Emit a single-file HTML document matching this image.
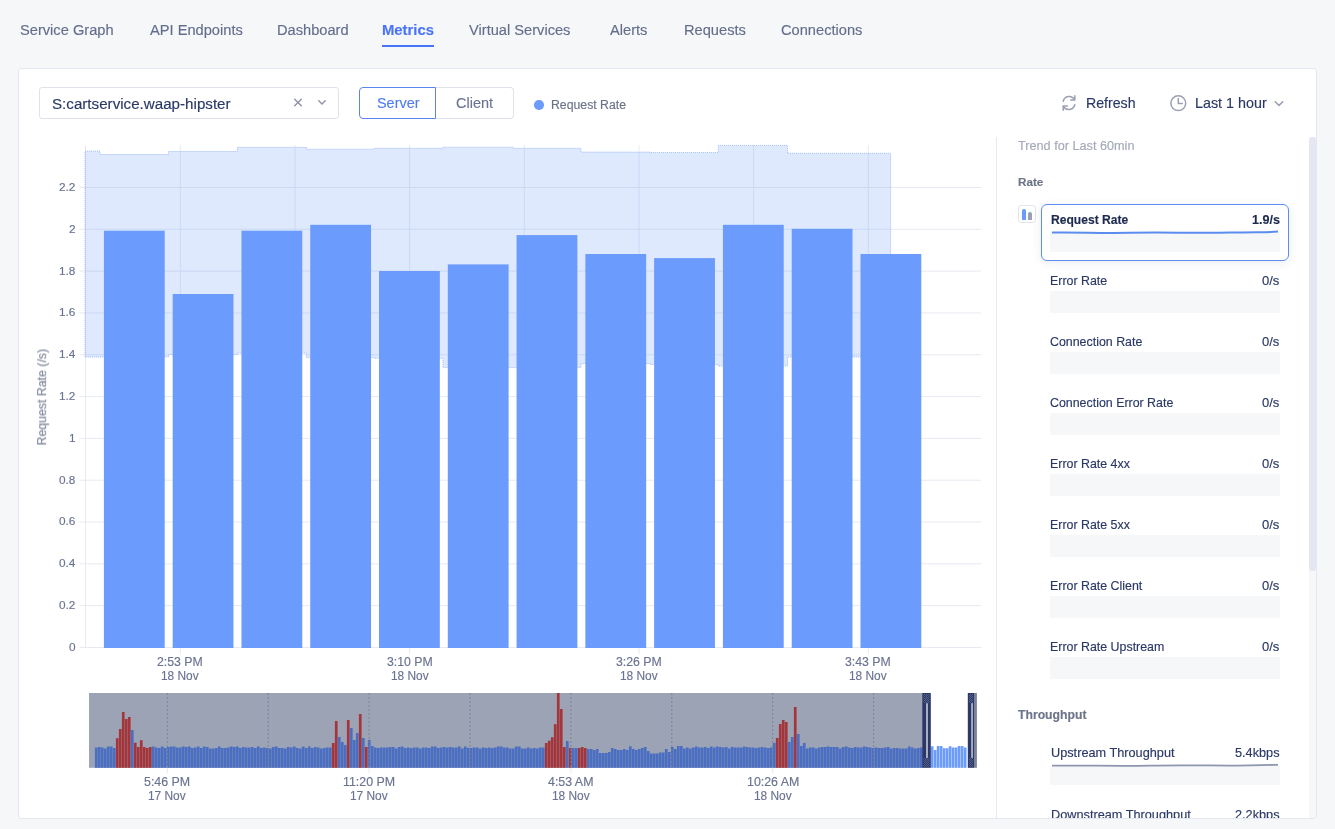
<!DOCTYPE html><html><head><meta charset="utf-8"><style>
*{margin:0;padding:0;box-sizing:border-box}
html,body{width:1335px;height:829px;overflow:hidden;background:#f6f7f9;font-family:"Liberation Sans",sans-serif}
.t{position:absolute;white-space:nowrap;line-height:1;will-change:transform;-webkit-text-stroke:0.15px currentColor}
.abs{position:absolute}
svg{position:absolute;left:0;top:0;overflow:visible}
</style></head><body>
<div class="t" style="left:20.30px;top:23.00px;font-size:14.65px;color:#636e8c;font-weight:400">Service Graph</div>
<div class="t" style="left:149.70px;top:23.00px;font-size:14.65px;color:#636e8c;font-weight:400">API Endpoints</div>
<div class="t" style="left:276.80px;top:23.00px;font-size:14.65px;color:#636e8c;font-weight:400">Dashboard</div>
<div class="t" style="left:382.30px;top:23.00px;font-size:14.85px;color:#4a74f8;font-weight:700">Metrics</div>
<div class="abs" style="left:382.3px;top:45px;width:52px;height:2px;background:#4a74f8"></div>
<div class="t" style="left:469.40px;top:23.00px;font-size:14.65px;color:#636e8c;font-weight:400">Virtual Services</div>
<div class="t" style="left:609.70px;top:23.00px;font-size:14.65px;color:#636e8c;font-weight:400">Alerts</div>
<div class="t" style="left:683.70px;top:23.00px;font-size:14.65px;color:#636e8c;font-weight:400">Requests</div>
<div class="t" style="left:780.90px;top:23.00px;font-size:14.65px;color:#636e8c;font-weight:400">Connections</div>
<div class="abs" style="left:18px;top:68px;width:1299px;height:751px;background:#fff;border:1px solid #e4e7f0;border-radius:3px"></div>
<div class="abs" style="left:39px;top:87px;width:300px;height:32px;border:1px solid #dfe2ea;border-radius:3px"></div>
<div class="t" style="left:52.30px;top:96.00px;font-size:15.16px;color:#2a3866;font-weight:400">S:cartservice.waap-hipster</div>
<svg width="1335" height="829"><g stroke="#8d93a6" stroke-width="1.4" fill="none" stroke-linecap="round"><path d="M294.7 99.2 L301.3 105.8"/><path d="M301.3 99.2 L294.7 105.8"/><path d="M318.8 100.7 L322 103.9 L325.2 100.7"/></g></svg>
<div class="abs" style="left:436px;top:87px;width:78px;height:32px;border:1px solid #dfe2ea;border-left:none;border-radius:0 4px 4px 0"></div>
<div class="abs" style="left:359px;top:87px;width:77px;height:32px;border:1px solid #5a85ef;border-radius:4px 0 0 4px"></div>
<div class="t" style="left:376.50px;top:96.00px;font-size:14.43px;color:#4f7cf0;font-weight:400">Server</div>
<div class="t" style="left:456.00px;top:96.00px;font-size:14.47px;color:#6b7591;font-weight:400">Client</div>
<div class="abs" style="left:534px;top:100px;width:9.5px;height:9.5px;border-radius:50%;background:#6b9bfd"></div>
<div class="t" style="left:551.00px;top:99.00px;font-size:12.27px;color:#6b7388;font-weight:400">Request Rate</div>
<svg width="1335" height="829"><g stroke="#9aa0b2" stroke-width="1.5" fill="none" stroke-linecap="round" stroke-linejoin="round"><path d="M1063.2 101.2 A6.2 6.2 0 0 1 1074.6 99.6"/><path d="M1074.8 95.8 L1074.8 99.9 L1070.7 99.9"/><path d="M1074.8 104.8 A6.2 6.2 0 0 1 1063.4 106.4"/><path d="M1063.2 110.2 L1063.2 106.1 L1067.3 106.1"/><circle cx="1178.3" cy="103.2" r="7.4"/><path d="M1178.3 98.6 L1178.3 103.6 L1182.2 103.6"/><path d="M1275.2 101.8 L1279 105.4 L1282.8 101.8"/></g></svg>
<div class="t" style="left:1085.60px;top:96.00px;font-size:14.17px;color:#2a3866;font-weight:400">Refresh</div>
<div class="t" style="left:1195.00px;top:96.00px;font-size:14.33px;color:#2a3866;font-weight:400">Last 1 hour</div>
<svg width="1335" height="829">
<line x1="79.5" y1="647.50" x2="981" y2="647.50" stroke="#e7eaf1" stroke-width="1"/>
<line x1="79.5" y1="605.68" x2="981" y2="605.68" stroke="#e7eaf1" stroke-width="1"/>
<line x1="79.5" y1="563.86" x2="981" y2="563.86" stroke="#e7eaf1" stroke-width="1"/>
<line x1="79.5" y1="522.04" x2="981" y2="522.04" stroke="#e7eaf1" stroke-width="1"/>
<line x1="79.5" y1="480.22" x2="981" y2="480.22" stroke="#e7eaf1" stroke-width="1"/>
<line x1="79.5" y1="438.40" x2="981" y2="438.40" stroke="#e7eaf1" stroke-width="1"/>
<line x1="79.5" y1="396.58" x2="981" y2="396.58" stroke="#e7eaf1" stroke-width="1"/>
<line x1="79.5" y1="354.76" x2="981" y2="354.76" stroke="#e7eaf1" stroke-width="1"/>
<line x1="79.5" y1="312.94" x2="981" y2="312.94" stroke="#e7eaf1" stroke-width="1"/>
<line x1="79.5" y1="271.12" x2="981" y2="271.12" stroke="#e7eaf1" stroke-width="1"/>
<line x1="79.5" y1="229.30" x2="981" y2="229.30" stroke="#e7eaf1" stroke-width="1"/>
<line x1="79.5" y1="187.48" x2="981" y2="187.48" stroke="#e7eaf1" stroke-width="1"/>
<line x1="180.30" y1="145" x2="180.30" y2="654" stroke="#e7eaf1" stroke-width="1"/>
<line x1="294.97" y1="145" x2="294.97" y2="648" stroke="#e7eaf1" stroke-width="1"/>
<line x1="409.64" y1="145" x2="409.64" y2="654" stroke="#e7eaf1" stroke-width="1"/>
<line x1="524.31" y1="145" x2="524.31" y2="648" stroke="#e7eaf1" stroke-width="1"/>
<line x1="638.98" y1="145" x2="638.98" y2="654" stroke="#e7eaf1" stroke-width="1"/>
<line x1="753.65" y1="145" x2="753.65" y2="648" stroke="#e7eaf1" stroke-width="1"/>
<line x1="868.32" y1="145" x2="868.32" y2="654" stroke="#e7eaf1" stroke-width="1"/>
<line x1="85.5" y1="145" x2="85.5" y2="648" stroke="#e7eaf1" stroke-width="1"/>
<path d="M85.0 151.1 L100.0 151.1 L100.0 154.5 L168.6 154.5 L168.6 151.5 L237.3 151.5 L237.3 147.3 L306.5 147.3 L306.5 149.2 L374.0 149.2 L374.0 148.3 L443.0 148.3 L443.0 147.2 L513.0 147.2 L513.0 148.3 L581.0 148.3 L581.0 152.1 L650.3 152.1 L650.3 152.6 L718.3 152.6 L718.3 145.4 L787.5 145.4 L787.5 153.3 L890.6 153.3 L890.6 357.0 L787.5 357.0 L787.5 366.0 L718.3 366.0 L718.3 364.5 L650.3 364.5 L650.3 363.5 L581.0 363.5 L581.0 367.6 L513.0 367.6 L513.0 367.6 L443.0 367.6 L443.0 358.2 L374.0 358.2 L374.0 357.6 L306.5 357.6 L306.5 353.0 L237.3 353.0 L237.3 354.5 L168.6 354.5 L168.6 357.0 L100.0 357.0 L100.0 357.0 L85.0 357.0Z" fill="rgba(100,150,250,0.21)" stroke="#a3bcf3" stroke-width="1" stroke-dasharray="1 1"/>
<rect x="103.90" y="230.7" width="60.8" height="417.30" fill="#6b9bfd"/>
<rect x="172.68" y="294" width="60.8" height="354.00" fill="#6b9bfd"/>
<rect x="241.46" y="230.7" width="60.8" height="417.30" fill="#6b9bfd"/>
<rect x="310.24" y="224.8" width="60.8" height="423.20" fill="#6b9bfd"/>
<rect x="379.02" y="271" width="60.8" height="377.00" fill="#6b9bfd"/>
<rect x="447.80" y="264.4" width="60.8" height="383.60" fill="#6b9bfd"/>
<rect x="516.58" y="235.1" width="60.8" height="412.90" fill="#6b9bfd"/>
<rect x="585.36" y="254" width="60.8" height="394.00" fill="#6b9bfd"/>
<rect x="654.14" y="258.1" width="60.8" height="389.90" fill="#6b9bfd"/>
<rect x="722.92" y="224.8" width="60.8" height="423.20" fill="#6b9bfd"/>
<rect x="791.70" y="228.8" width="60.8" height="419.20" fill="#6b9bfd"/>
<rect x="860.48" y="254" width="60.8" height="394.00" fill="#6b9bfd"/>
</svg>
<div class="t" style="left:69.04px;top:642.00px;font-size:11.8px;color:#6a7390;font-weight:400">0</div>
<div class="t" style="left:59.20px;top:600.00px;font-size:11.8px;color:#6a7390;font-weight:400">0.2</div>
<div class="t" style="left:59.20px;top:558.00px;font-size:11.8px;color:#6a7390;font-weight:400">0.4</div>
<div class="t" style="left:59.20px;top:516.00px;font-size:11.8px;color:#6a7390;font-weight:400">0.6</div>
<div class="t" style="left:59.20px;top:475.00px;font-size:11.8px;color:#6a7390;font-weight:400">0.8</div>
<div class="t" style="left:69.04px;top:433.00px;font-size:11.8px;color:#6a7390;font-weight:400">1</div>
<div class="t" style="left:59.20px;top:391.00px;font-size:11.8px;color:#6a7390;font-weight:400">1.2</div>
<div class="t" style="left:59.20px;top:349.00px;font-size:11.8px;color:#6a7390;font-weight:400">1.4</div>
<div class="t" style="left:59.20px;top:307.00px;font-size:11.8px;color:#6a7390;font-weight:400">1.6</div>
<div class="t" style="left:59.20px;top:266.00px;font-size:11.8px;color:#6a7390;font-weight:400">1.8</div>
<div class="t" style="left:69.04px;top:224.00px;font-size:11.8px;color:#6a7390;font-weight:400">2</div>
<div class="t" style="left:59.20px;top:182.00px;font-size:11.8px;color:#6a7390;font-weight:400">2.2</div>
<div class="t" style="left:-5.58px;top:390.63px;width:96.62px;font-size:12.33px;color:#7a8297;transform:rotate(-90deg);transform-origin:50% 50%">Request Rate (/s)</div>
<div class="t" style="left:157.45px;top:656.00px;font-size:12.27px;color:#6a7390;font-weight:400">2:53 PM</div>
<div class="t" style="left:161.45px;top:671.00px;font-size:11.9px;color:#6a7390;font-weight:400">18 Nov</div>
<div class="t" style="left:386.79px;top:656.00px;font-size:12.27px;color:#6a7390;font-weight:400">3:10 PM</div>
<div class="t" style="left:390.79px;top:671.00px;font-size:11.9px;color:#6a7390;font-weight:400">18 Nov</div>
<div class="t" style="left:616.13px;top:656.00px;font-size:12.27px;color:#6a7390;font-weight:400">3:26 PM</div>
<div class="t" style="left:620.13px;top:671.00px;font-size:11.9px;color:#6a7390;font-weight:400">18 Nov</div>
<div class="t" style="left:845.47px;top:656.00px;font-size:12.27px;color:#6a7390;font-weight:400">3:43 PM</div>
<div class="t" style="left:849.47px;top:671.00px;font-size:11.9px;color:#6a7390;font-weight:400">18 Nov</div>
<svg width="1335" height="829">
<rect x="89" y="693" width="833.2" height="74.79999999999995" fill="#9ca3b4"/>
<rect x="974" y="693" width="2.9" height="74.79999999999995" fill="#7b8398"/>
<rect x="94.9" y="747.5" width="2.7" height="20.3" fill="#4a6ec2"/>
<rect x="97.9" y="747.0" width="2.7" height="20.8" fill="#4a6ec2"/>
<rect x="100.9" y="747.5" width="2.7" height="20.3" fill="#4a6ec2"/>
<rect x="103.9" y="748.5" width="2.7" height="19.3" fill="#4a6ec2"/>
<rect x="106.9" y="746.5" width="2.7" height="21.3" fill="#4a6ec2"/>
<rect x="109.9" y="746.5" width="2.7" height="21.3" fill="#4a6ec2"/>
<rect x="112.9" y="748.0" width="2.7" height="19.8" fill="#4a6ec2"/>
<rect x="115.9" y="738.2" width="2.7" height="29.6" fill="#a4363b"/>
<rect x="118.9" y="729.0" width="2.7" height="38.8" fill="#a4363b"/>
<rect x="121.9" y="712.0" width="2.7" height="55.8" fill="#a4363b"/>
<rect x="124.9" y="719.0" width="2.7" height="48.8" fill="#a4363b"/>
<rect x="127.9" y="717.0" width="2.7" height="50.8" fill="#a4363b"/>
<rect x="130.9" y="730.0" width="2.7" height="37.8" fill="#4a6ec2"/>
<rect x="133.9" y="742.7" width="2.7" height="25.1" fill="#a4363b"/>
<rect x="136.9" y="747.0" width="2.7" height="20.8" fill="#a4363b"/>
<rect x="139.9" y="740.2" width="2.7" height="27.6" fill="#a4363b"/>
<rect x="142.9" y="747.0" width="2.7" height="20.8" fill="#a4363b"/>
<rect x="145.9" y="748.0" width="2.7" height="19.8" fill="#a4363b"/>
<rect x="148.9" y="747.0" width="2.7" height="20.8" fill="#a4363b"/>
<rect x="151.9" y="746.5" width="2.7" height="21.3" fill="#4a6ec2"/>
<rect x="154.9" y="747.5" width="2.7" height="20.3" fill="#4a6ec2"/>
<rect x="157.9" y="748.0" width="2.7" height="19.8" fill="#4a6ec2"/>
<rect x="160.9" y="746.5" width="2.7" height="21.3" fill="#4a6ec2"/>
<rect x="163.9" y="748.0" width="2.7" height="19.8" fill="#4a6ec2"/>
<rect x="166.9" y="747.0" width="2.7" height="20.8" fill="#4a6ec2"/>
<rect x="169.9" y="746.5" width="2.7" height="21.3" fill="#4a6ec2"/>
<rect x="172.9" y="746.5" width="2.7" height="21.3" fill="#4a6ec2"/>
<rect x="175.9" y="747.5" width="2.7" height="20.3" fill="#4a6ec2"/>
<rect x="178.9" y="747.5" width="2.7" height="20.3" fill="#4a6ec2"/>
<rect x="181.9" y="746.5" width="2.7" height="21.3" fill="#4a6ec2"/>
<rect x="184.9" y="747.0" width="2.7" height="20.8" fill="#4a6ec2"/>
<rect x="187.9" y="746.5" width="2.7" height="21.3" fill="#4a6ec2"/>
<rect x="190.9" y="748.0" width="2.7" height="19.8" fill="#4a6ec2"/>
<rect x="193.9" y="747.5" width="2.7" height="20.3" fill="#4a6ec2"/>
<rect x="196.9" y="746.5" width="2.7" height="21.3" fill="#4a6ec2"/>
<rect x="199.9" y="748.0" width="2.7" height="19.8" fill="#4a6ec2"/>
<rect x="202.9" y="746.5" width="2.7" height="21.3" fill="#4a6ec2"/>
<rect x="205.9" y="747.0" width="2.7" height="20.8" fill="#4a6ec2"/>
<rect x="208.9" y="748.5" width="2.7" height="19.3" fill="#4a6ec2"/>
<rect x="211.9" y="748.5" width="2.7" height="19.3" fill="#4a6ec2"/>
<rect x="214.9" y="748.0" width="2.7" height="19.8" fill="#4a6ec2"/>
<rect x="217.9" y="746.5" width="2.7" height="21.3" fill="#4a6ec2"/>
<rect x="220.9" y="748.0" width="2.7" height="19.8" fill="#4a6ec2"/>
<rect x="223.9" y="748.0" width="2.7" height="19.8" fill="#4a6ec2"/>
<rect x="226.9" y="747.5" width="2.7" height="20.3" fill="#4a6ec2"/>
<rect x="229.9" y="746.5" width="2.7" height="21.3" fill="#4a6ec2"/>
<rect x="232.9" y="747.0" width="2.7" height="20.8" fill="#4a6ec2"/>
<rect x="235.9" y="746.5" width="2.7" height="21.3" fill="#4a6ec2"/>
<rect x="238.9" y="748.0" width="2.7" height="19.8" fill="#4a6ec2"/>
<rect x="241.9" y="747.0" width="2.7" height="20.8" fill="#4a6ec2"/>
<rect x="244.9" y="747.5" width="2.7" height="20.3" fill="#4a6ec2"/>
<rect x="247.9" y="747.5" width="2.7" height="20.3" fill="#4a6ec2"/>
<rect x="250.9" y="747.0" width="2.7" height="20.8" fill="#4a6ec2"/>
<rect x="253.9" y="748.0" width="2.7" height="19.8" fill="#4a6ec2"/>
<rect x="256.9" y="746.5" width="2.7" height="21.3" fill="#4a6ec2"/>
<rect x="259.9" y="748.0" width="2.7" height="19.8" fill="#4a6ec2"/>
<rect x="262.9" y="747.5" width="2.7" height="20.3" fill="#4a6ec2"/>
<rect x="265.9" y="748.0" width="2.7" height="19.8" fill="#4a6ec2"/>
<rect x="268.9" y="748.5" width="2.7" height="19.3" fill="#4a6ec2"/>
<rect x="271.9" y="747.0" width="2.7" height="20.8" fill="#4a6ec2"/>
<rect x="274.9" y="746.5" width="2.7" height="21.3" fill="#4a6ec2"/>
<rect x="277.9" y="748.0" width="2.7" height="19.8" fill="#4a6ec2"/>
<rect x="280.9" y="748.0" width="2.7" height="19.8" fill="#4a6ec2"/>
<rect x="283.9" y="748.5" width="2.7" height="19.3" fill="#4a6ec2"/>
<rect x="286.9" y="747.0" width="2.7" height="20.8" fill="#4a6ec2"/>
<rect x="289.9" y="747.5" width="2.7" height="20.3" fill="#4a6ec2"/>
<rect x="292.9" y="746.5" width="2.7" height="21.3" fill="#4a6ec2"/>
<rect x="295.9" y="748.0" width="2.7" height="19.8" fill="#4a6ec2"/>
<rect x="298.9" y="748.5" width="2.7" height="19.3" fill="#4a6ec2"/>
<rect x="301.9" y="746.5" width="2.7" height="21.3" fill="#4a6ec2"/>
<rect x="304.9" y="748.0" width="2.7" height="19.8" fill="#4a6ec2"/>
<rect x="307.9" y="746.5" width="2.7" height="21.3" fill="#4a6ec2"/>
<rect x="310.9" y="748.0" width="2.7" height="19.8" fill="#4a6ec2"/>
<rect x="313.9" y="747.0" width="2.7" height="20.8" fill="#4a6ec2"/>
<rect x="316.9" y="747.5" width="2.7" height="20.3" fill="#4a6ec2"/>
<rect x="319.9" y="748.5" width="2.7" height="19.3" fill="#4a6ec2"/>
<rect x="322.9" y="748.0" width="2.7" height="19.8" fill="#4a6ec2"/>
<rect x="325.9" y="747.5" width="2.7" height="20.3" fill="#4a6ec2"/>
<rect x="328.9" y="747.5" width="2.7" height="20.3" fill="#4a6ec2"/>
<rect x="331.9" y="743.0" width="2.7" height="24.8" fill="#a4363b"/>
<rect x="334.9" y="721.0" width="2.7" height="46.8" fill="#a4363b"/>
<rect x="337.9" y="737.0" width="2.7" height="30.8" fill="#4a6ec2"/>
<rect x="340.9" y="742.0" width="2.7" height="25.8" fill="#4a6ec2"/>
<rect x="343.9" y="745.0" width="2.7" height="22.8" fill="#4a6ec2"/>
<rect x="346.9" y="720.0" width="2.7" height="47.8" fill="#a4363b"/>
<rect x="349.9" y="728.0" width="2.7" height="39.8" fill="#4a6ec2"/>
<rect x="352.9" y="740.0" width="2.7" height="27.8" fill="#4a6ec2"/>
<rect x="355.9" y="733.0" width="2.7" height="34.8" fill="#4a6ec2"/>
<rect x="358.9" y="714.0" width="2.7" height="53.8" fill="#a4363b"/>
<rect x="361.9" y="738.0" width="2.7" height="29.8" fill="#4a6ec2"/>
<rect x="364.9" y="747.0" width="2.7" height="20.8" fill="#a4363b"/>
<rect x="367.9" y="740.0" width="2.7" height="27.8" fill="#4a6ec2"/>
<rect x="370.9" y="746.0" width="2.7" height="21.8" fill="#4a6ec2"/>
<rect x="373.9" y="747.5" width="2.7" height="20.3" fill="#4a6ec2"/>
<rect x="376.9" y="748.0" width="2.7" height="19.8" fill="#4a6ec2"/>
<rect x="379.9" y="747.5" width="2.7" height="20.3" fill="#4a6ec2"/>
<rect x="382.9" y="747.5" width="2.7" height="20.3" fill="#4a6ec2"/>
<rect x="385.9" y="747.5" width="2.7" height="20.3" fill="#4a6ec2"/>
<rect x="388.9" y="747.0" width="2.7" height="20.8" fill="#4a6ec2"/>
<rect x="391.9" y="747.0" width="2.7" height="20.8" fill="#4a6ec2"/>
<rect x="394.9" y="748.5" width="2.7" height="19.3" fill="#4a6ec2"/>
<rect x="397.9" y="747.0" width="2.7" height="20.8" fill="#4a6ec2"/>
<rect x="400.9" y="746.5" width="2.7" height="21.3" fill="#4a6ec2"/>
<rect x="403.9" y="748.0" width="2.7" height="19.8" fill="#4a6ec2"/>
<rect x="406.9" y="747.5" width="2.7" height="20.3" fill="#4a6ec2"/>
<rect x="409.9" y="748.0" width="2.7" height="19.8" fill="#4a6ec2"/>
<rect x="412.9" y="747.5" width="2.7" height="20.3" fill="#4a6ec2"/>
<rect x="415.9" y="747.5" width="2.7" height="20.3" fill="#4a6ec2"/>
<rect x="418.9" y="748.5" width="2.7" height="19.3" fill="#4a6ec2"/>
<rect x="421.9" y="747.5" width="2.7" height="20.3" fill="#4a6ec2"/>
<rect x="424.9" y="747.5" width="2.7" height="20.3" fill="#4a6ec2"/>
<rect x="427.9" y="748.0" width="2.7" height="19.8" fill="#4a6ec2"/>
<rect x="430.9" y="746.5" width="2.7" height="21.3" fill="#4a6ec2"/>
<rect x="433.9" y="746.5" width="2.7" height="21.3" fill="#4a6ec2"/>
<rect x="436.9" y="748.0" width="2.7" height="19.8" fill="#4a6ec2"/>
<rect x="439.9" y="747.5" width="2.7" height="20.3" fill="#4a6ec2"/>
<rect x="442.9" y="747.0" width="2.7" height="20.8" fill="#4a6ec2"/>
<rect x="445.9" y="747.5" width="2.7" height="20.3" fill="#4a6ec2"/>
<rect x="448.9" y="747.0" width="2.7" height="20.8" fill="#4a6ec2"/>
<rect x="451.9" y="747.5" width="2.7" height="20.3" fill="#4a6ec2"/>
<rect x="454.9" y="747.5" width="2.7" height="20.3" fill="#4a6ec2"/>
<rect x="457.9" y="746.5" width="2.7" height="21.3" fill="#4a6ec2"/>
<rect x="460.9" y="748.5" width="2.7" height="19.3" fill="#4a6ec2"/>
<rect x="463.9" y="746.5" width="2.7" height="21.3" fill="#4a6ec2"/>
<rect x="466.9" y="748.0" width="2.7" height="19.8" fill="#4a6ec2"/>
<rect x="469.9" y="748.0" width="2.7" height="19.8" fill="#4a6ec2"/>
<rect x="472.9" y="747.5" width="2.7" height="20.3" fill="#4a6ec2"/>
<rect x="475.9" y="747.5" width="2.7" height="20.3" fill="#4a6ec2"/>
<rect x="478.9" y="748.5" width="2.7" height="19.3" fill="#4a6ec2"/>
<rect x="481.9" y="747.5" width="2.7" height="20.3" fill="#4a6ec2"/>
<rect x="484.9" y="748.0" width="2.7" height="19.8" fill="#4a6ec2"/>
<rect x="487.9" y="747.5" width="2.7" height="20.3" fill="#4a6ec2"/>
<rect x="490.9" y="748.0" width="2.7" height="19.8" fill="#4a6ec2"/>
<rect x="493.9" y="747.5" width="2.7" height="20.3" fill="#4a6ec2"/>
<rect x="496.9" y="746.5" width="2.7" height="21.3" fill="#4a6ec2"/>
<rect x="499.9" y="746.5" width="2.7" height="21.3" fill="#4a6ec2"/>
<rect x="502.9" y="747.5" width="2.7" height="20.3" fill="#4a6ec2"/>
<rect x="505.9" y="747.5" width="2.7" height="20.3" fill="#4a6ec2"/>
<rect x="508.9" y="748.5" width="2.7" height="19.3" fill="#4a6ec2"/>
<rect x="511.9" y="748.5" width="2.7" height="19.3" fill="#4a6ec2"/>
<rect x="514.9" y="746.5" width="2.7" height="21.3" fill="#4a6ec2"/>
<rect x="517.9" y="746.5" width="2.7" height="21.3" fill="#4a6ec2"/>
<rect x="520.9" y="748.5" width="2.7" height="19.3" fill="#4a6ec2"/>
<rect x="523.9" y="748.5" width="2.7" height="19.3" fill="#4a6ec2"/>
<rect x="526.9" y="747.5" width="2.7" height="20.3" fill="#4a6ec2"/>
<rect x="529.9" y="748.5" width="2.7" height="19.3" fill="#4a6ec2"/>
<rect x="532.9" y="748.0" width="2.7" height="19.8" fill="#4a6ec2"/>
<rect x="535.9" y="748.5" width="2.7" height="19.3" fill="#4a6ec2"/>
<rect x="538.9" y="747.5" width="2.7" height="20.3" fill="#4a6ec2"/>
<rect x="541.9" y="747.5" width="2.7" height="20.3" fill="#4a6ec2"/>
<rect x="544.9" y="743.0" width="2.7" height="24.8" fill="#a4363b"/>
<rect x="547.9" y="740.7" width="2.7" height="27.1" fill="#a4363b"/>
<rect x="550.9" y="737.3" width="2.7" height="30.5" fill="#a4363b"/>
<rect x="553.9" y="724.2" width="2.7" height="43.6" fill="#a4363b"/>
<rect x="556.9" y="693.0" width="2.7" height="74.8" fill="#a4363b"/>
<rect x="559.9" y="709.0" width="2.7" height="58.8" fill="#a4363b"/>
<rect x="562.9" y="747.0" width="2.7" height="20.8" fill="#a4363b"/>
<rect x="565.9" y="741.0" width="2.7" height="26.8" fill="#4a6ec2"/>
<rect x="568.9" y="748.0" width="2.7" height="19.8" fill="#a4363b"/>
<rect x="571.9" y="748.0" width="2.7" height="19.8" fill="#4a6ec2"/>
<rect x="574.9" y="748.0" width="2.7" height="19.8" fill="#4a6ec2"/>
<rect x="577.9" y="748.0" width="2.7" height="19.8" fill="#a4363b"/>
<rect x="580.9" y="747.0" width="2.7" height="20.8" fill="#a4363b"/>
<rect x="583.9" y="748.0" width="2.7" height="19.8" fill="#a4363b"/>
<rect x="586.9" y="749.0" width="2.7" height="18.8" fill="#4a6ec2"/>
<rect x="589.9" y="749.0" width="2.7" height="18.8" fill="#4a6ec2"/>
<rect x="592.9" y="750.0" width="2.7" height="17.8" fill="#4a6ec2"/>
<rect x="595.9" y="749.0" width="2.7" height="18.8" fill="#4a6ec2"/>
<rect x="598.9" y="753.0" width="2.7" height="14.8" fill="#4a6ec2"/>
<rect x="601.9" y="753.0" width="2.7" height="14.8" fill="#4a6ec2"/>
<rect x="604.9" y="753.0" width="2.7" height="14.8" fill="#4a6ec2"/>
<rect x="607.9" y="752.0" width="2.7" height="15.8" fill="#4a6ec2"/>
<rect x="610.9" y="748.0" width="2.7" height="19.8" fill="#4a6ec2"/>
<rect x="613.9" y="749.0" width="2.7" height="18.8" fill="#4a6ec2"/>
<rect x="616.9" y="750.0" width="2.7" height="17.8" fill="#4a6ec2"/>
<rect x="619.9" y="750.0" width="2.7" height="17.8" fill="#4a6ec2"/>
<rect x="622.9" y="749.0" width="2.7" height="18.8" fill="#4a6ec2"/>
<rect x="625.9" y="750.0" width="2.7" height="17.8" fill="#4a6ec2"/>
<rect x="628.9" y="746.3" width="2.7" height="21.5" fill="#4a6ec2"/>
<rect x="631.9" y="749.0" width="2.7" height="18.8" fill="#4a6ec2"/>
<rect x="634.9" y="750.0" width="2.7" height="17.8" fill="#4a6ec2"/>
<rect x="637.9" y="749.0" width="2.7" height="18.8" fill="#4a6ec2"/>
<rect x="640.9" y="748.0" width="2.7" height="19.8" fill="#4a6ec2"/>
<rect x="643.9" y="747.0" width="2.7" height="20.8" fill="#4a6ec2"/>
<rect x="646.9" y="751.0" width="2.7" height="16.8" fill="#4a6ec2"/>
<rect x="649.9" y="753.5" width="2.7" height="14.3" fill="#4a6ec2"/>
<rect x="652.9" y="753.5" width="2.7" height="14.3" fill="#4a6ec2"/>
<rect x="655.9" y="753.5" width="2.7" height="14.3" fill="#4a6ec2"/>
<rect x="658.9" y="752.5" width="2.7" height="15.3" fill="#4a6ec2"/>
<rect x="661.9" y="752.5" width="2.7" height="15.3" fill="#4a6ec2"/>
<rect x="664.9" y="749.0" width="2.7" height="18.8" fill="#4a6ec2"/>
<rect x="667.9" y="752.0" width="2.7" height="15.8" fill="#4a6ec2"/>
<rect x="670.9" y="747.0" width="2.7" height="20.8" fill="#4a6ec2"/>
<rect x="673.9" y="749.0" width="2.7" height="18.8" fill="#4a6ec2"/>
<rect x="676.9" y="746.0" width="2.7" height="21.8" fill="#4a6ec2"/>
<rect x="679.9" y="746.0" width="2.7" height="21.8" fill="#4a6ec2"/>
<rect x="682.9" y="748.5" width="2.7" height="19.3" fill="#4a6ec2"/>
<rect x="685.9" y="747.5" width="2.7" height="20.3" fill="#4a6ec2"/>
<rect x="688.9" y="748.5" width="2.7" height="19.3" fill="#4a6ec2"/>
<rect x="691.9" y="747.5" width="2.7" height="20.3" fill="#4a6ec2"/>
<rect x="694.9" y="746.5" width="2.7" height="21.3" fill="#4a6ec2"/>
<rect x="697.9" y="747.5" width="2.7" height="20.3" fill="#4a6ec2"/>
<rect x="700.9" y="747.5" width="2.7" height="20.3" fill="#4a6ec2"/>
<rect x="703.9" y="747.0" width="2.7" height="20.8" fill="#4a6ec2"/>
<rect x="706.9" y="748.0" width="2.7" height="19.8" fill="#4a6ec2"/>
<rect x="709.9" y="746.5" width="2.7" height="21.3" fill="#4a6ec2"/>
<rect x="712.9" y="747.5" width="2.7" height="20.3" fill="#4a6ec2"/>
<rect x="715.9" y="746.5" width="2.7" height="21.3" fill="#4a6ec2"/>
<rect x="718.9" y="747.0" width="2.7" height="20.8" fill="#4a6ec2"/>
<rect x="721.9" y="747.5" width="2.7" height="20.3" fill="#4a6ec2"/>
<rect x="724.9" y="747.0" width="2.7" height="20.8" fill="#4a6ec2"/>
<rect x="727.9" y="748.5" width="2.7" height="19.3" fill="#4a6ec2"/>
<rect x="730.9" y="747.0" width="2.7" height="20.8" fill="#4a6ec2"/>
<rect x="733.9" y="747.5" width="2.7" height="20.3" fill="#4a6ec2"/>
<rect x="736.9" y="747.5" width="2.7" height="20.3" fill="#4a6ec2"/>
<rect x="739.9" y="747.5" width="2.7" height="20.3" fill="#4a6ec2"/>
<rect x="742.9" y="746.5" width="2.7" height="21.3" fill="#4a6ec2"/>
<rect x="745.9" y="747.0" width="2.7" height="20.8" fill="#4a6ec2"/>
<rect x="748.9" y="747.5" width="2.7" height="20.3" fill="#4a6ec2"/>
<rect x="751.9" y="747.5" width="2.7" height="20.3" fill="#4a6ec2"/>
<rect x="754.9" y="748.0" width="2.7" height="19.8" fill="#4a6ec2"/>
<rect x="757.9" y="747.5" width="2.7" height="20.3" fill="#4a6ec2"/>
<rect x="760.9" y="747.0" width="2.7" height="20.8" fill="#4a6ec2"/>
<rect x="763.9" y="747.5" width="2.7" height="20.3" fill="#4a6ec2"/>
<rect x="766.9" y="748.0" width="2.7" height="19.8" fill="#4a6ec2"/>
<rect x="769.9" y="747.5" width="2.7" height="20.3" fill="#4a6ec2"/>
<rect x="772.9" y="743.0" width="2.7" height="24.8" fill="#4a6ec2"/>
<rect x="775.9" y="738.0" width="2.7" height="29.8" fill="#a4363b"/>
<rect x="778.9" y="724.0" width="2.7" height="43.8" fill="#a4363b"/>
<rect x="781.9" y="720.0" width="2.7" height="47.8" fill="#a4363b"/>
<rect x="784.9" y="722.0" width="2.7" height="45.8" fill="#a4363b"/>
<rect x="787.9" y="742.0" width="2.7" height="25.8" fill="#4a6ec2"/>
<rect x="790.9" y="737.0" width="2.7" height="30.8" fill="#4a6ec2"/>
<rect x="793.9" y="707.0" width="2.7" height="60.8" fill="#a4363b"/>
<rect x="796.9" y="734.0" width="2.7" height="33.8" fill="#4a6ec2"/>
<rect x="799.9" y="746.0" width="2.7" height="21.8" fill="#4a6ec2"/>
<rect x="802.9" y="743.0" width="2.7" height="24.8" fill="#4a6ec2"/>
<rect x="805.9" y="748.5" width="2.7" height="19.3" fill="#4a6ec2"/>
<rect x="808.9" y="747.5" width="2.7" height="20.3" fill="#4a6ec2"/>
<rect x="811.9" y="747.5" width="2.7" height="20.3" fill="#4a6ec2"/>
<rect x="814.9" y="748.5" width="2.7" height="19.3" fill="#4a6ec2"/>
<rect x="817.9" y="747.5" width="2.7" height="20.3" fill="#4a6ec2"/>
<rect x="820.9" y="747.0" width="2.7" height="20.8" fill="#4a6ec2"/>
<rect x="823.9" y="747.0" width="2.7" height="20.8" fill="#4a6ec2"/>
<rect x="826.9" y="746.5" width="2.7" height="21.3" fill="#4a6ec2"/>
<rect x="829.9" y="747.0" width="2.7" height="20.8" fill="#4a6ec2"/>
<rect x="832.9" y="747.0" width="2.7" height="20.8" fill="#4a6ec2"/>
<rect x="835.9" y="747.0" width="2.7" height="20.8" fill="#4a6ec2"/>
<rect x="838.9" y="748.5" width="2.7" height="19.3" fill="#4a6ec2"/>
<rect x="841.9" y="747.0" width="2.7" height="20.8" fill="#4a6ec2"/>
<rect x="844.9" y="746.5" width="2.7" height="21.3" fill="#4a6ec2"/>
<rect x="847.9" y="747.5" width="2.7" height="20.3" fill="#4a6ec2"/>
<rect x="850.9" y="748.0" width="2.7" height="19.8" fill="#4a6ec2"/>
<rect x="853.9" y="747.0" width="2.7" height="20.8" fill="#4a6ec2"/>
<rect x="856.9" y="747.5" width="2.7" height="20.3" fill="#4a6ec2"/>
<rect x="859.9" y="747.5" width="2.7" height="20.3" fill="#4a6ec2"/>
<rect x="862.9" y="746.5" width="2.7" height="21.3" fill="#4a6ec2"/>
<rect x="865.9" y="747.0" width="2.7" height="20.8" fill="#4a6ec2"/>
<rect x="868.9" y="747.5" width="2.7" height="20.3" fill="#4a6ec2"/>
<rect x="871.9" y="748.0" width="2.7" height="19.8" fill="#4a6ec2"/>
<rect x="874.9" y="747.5" width="2.7" height="20.3" fill="#4a6ec2"/>
<rect x="877.9" y="748.0" width="2.7" height="19.8" fill="#4a6ec2"/>
<rect x="880.9" y="748.0" width="2.7" height="19.8" fill="#4a6ec2"/>
<rect x="883.9" y="747.5" width="2.7" height="20.3" fill="#4a6ec2"/>
<rect x="886.9" y="747.0" width="2.7" height="20.8" fill="#4a6ec2"/>
<rect x="889.9" y="748.5" width="2.7" height="19.3" fill="#4a6ec2"/>
<rect x="892.9" y="748.0" width="2.7" height="19.8" fill="#4a6ec2"/>
<rect x="895.9" y="748.0" width="2.7" height="19.8" fill="#4a6ec2"/>
<rect x="898.9" y="748.5" width="2.7" height="19.3" fill="#4a6ec2"/>
<rect x="901.9" y="748.5" width="2.7" height="19.3" fill="#4a6ec2"/>
<rect x="904.9" y="748.5" width="2.7" height="19.3" fill="#4a6ec2"/>
<rect x="907.9" y="746.5" width="2.7" height="21.3" fill="#4a6ec2"/>
<rect x="910.9" y="747.5" width="2.7" height="20.3" fill="#4a6ec2"/>
<rect x="913.9" y="748.5" width="2.7" height="19.3" fill="#4a6ec2"/>
<rect x="916.9" y="748.0" width="2.7" height="19.8" fill="#4a6ec2"/>
<rect x="919.9" y="747.5" width="2.7" height="20.3" fill="#4a6ec2"/>
<rect x="930.8" y="746.3" width="2.7" height="21.5" fill="#6b9bfd"/>
<rect x="933.8" y="750.0" width="2.7" height="17.8" fill="#6b9bfd"/>
<rect x="936.8" y="746.0" width="2.7" height="21.8" fill="#6b9bfd"/>
<rect x="939.8" y="746.0" width="2.7" height="21.8" fill="#6b9bfd"/>
<rect x="942.8" y="748.2" width="2.7" height="19.6" fill="#6b9bfd"/>
<rect x="945.8" y="748.2" width="2.7" height="19.6" fill="#6b9bfd"/>
<rect x="948.8" y="746.3" width="2.7" height="21.5" fill="#6b9bfd"/>
<rect x="951.8" y="747.5" width="2.7" height="20.3" fill="#6b9bfd"/>
<rect x="954.8" y="747.5" width="2.7" height="20.3" fill="#6b9bfd"/>
<rect x="957.8" y="746.0" width="2.7" height="21.8" fill="#6b9bfd"/>
<rect x="960.8" y="746.0" width="2.7" height="21.8" fill="#6b9bfd"/>
<rect x="963.8" y="747.5" width="2.7" height="20.3" fill="#6b9bfd"/>
<line x1="167.3" y1="693" x2="167.3" y2="767.8" stroke="#7c8398" stroke-width="1" stroke-dasharray="2 2"/>
<line x1="167.3" y1="767.8" x2="167.3" y2="773" stroke="#e7eaf1" stroke-width="1"/>
<line x1="268.2" y1="693" x2="268.2" y2="767.8" stroke="#7c8398" stroke-width="1" stroke-dasharray="2 2"/>
<line x1="369.1" y1="693" x2="369.1" y2="767.8" stroke="#7c8398" stroke-width="1" stroke-dasharray="2 2"/>
<line x1="369.1" y1="767.8" x2="369.1" y2="773" stroke="#e7eaf1" stroke-width="1"/>
<line x1="470.0" y1="693" x2="470.0" y2="767.8" stroke="#7c8398" stroke-width="1" stroke-dasharray="2 2"/>
<line x1="570.9" y1="693" x2="570.9" y2="767.8" stroke="#7c8398" stroke-width="1" stroke-dasharray="2 2"/>
<line x1="570.9" y1="767.8" x2="570.9" y2="773" stroke="#e7eaf1" stroke-width="1"/>
<line x1="671.8" y1="693" x2="671.8" y2="767.8" stroke="#7c8398" stroke-width="1" stroke-dasharray="2 2"/>
<line x1="772.7" y1="693" x2="772.7" y2="767.8" stroke="#7c8398" stroke-width="1" stroke-dasharray="2 2"/>
<line x1="772.7" y1="767.8" x2="772.7" y2="773" stroke="#e7eaf1" stroke-width="1"/>
<line x1="873.6" y1="693" x2="873.6" y2="767.8" stroke="#7c8398" stroke-width="1" stroke-dasharray="2 2"/>
<defs><pattern id="hp" width="2" height="2" patternUnits="userSpaceOnUse"><rect width="2" height="2" fill="#2c3968"/><rect width="1" height="1" fill="#55608a"/><rect x="1" y="1" width="1" height="1" fill="#55608a"/></pattern></defs>
<rect x="922.2" y="693" width="8.6" height="74.79999999999995" fill="#2c3968"/>
<rect x="923.5" y="694" width="6" height="9" fill="url(#hp)"/>
<rect x="923.5" y="757.8" width="6" height="9" fill="url(#hp)"/>
<rect x="926.2" y="703.2" width="1.6" height="54.7" fill="#c9cdd8"/>
<rect x="967.8" y="693" width="6.2" height="74.79999999999995" fill="#2c3968"/>
<rect x="969" y="694" width="4" height="9" fill="url(#hp)"/>
<rect x="969" y="757.8" width="4" height="9" fill="url(#hp)"/>
<rect x="971.3" y="703.2" width="1.5" height="54.7" fill="#c9cdd8"/>
</svg>
<div class="t" style="left:144.21px;top:776.00px;font-size:12.4px;color:#6a7390;font-weight:400">5:46 PM</div>
<div class="t" style="left:148.45px;top:791.00px;font-size:11.9px;color:#6a7390;font-weight:400">17 Nov</div>
<div class="t" style="left:343.02px;top:776.00px;font-size:12.4px;color:#6a7390;font-weight:400">11:20 PM</div>
<div class="t" style="left:350.25px;top:791.00px;font-size:11.9px;color:#6a7390;font-weight:400">17 Nov</div>
<div class="t" style="left:548.15px;top:776.00px;font-size:12.4px;color:#6a7390;font-weight:400">4:53 AM</div>
<div class="t" style="left:552.05px;top:791.00px;font-size:11.9px;color:#6a7390;font-weight:400">18 Nov</div>
<div class="t" style="left:746.50px;top:776.00px;font-size:12.4px;color:#6a7390;font-weight:400">10:26 AM</div>
<div class="t" style="left:753.85px;top:791.00px;font-size:11.9px;color:#6a7390;font-weight:400">18 Nov</div>
<div class="abs" style="left:996px;top:137px;width:1px;height:681px;background:#e6e9f1"></div>
<div class="abs" style="left:1309px;top:137px;width:7px;height:681px;background:#f6f7f9"></div>
<div class="abs" style="left:1309px;top:137px;width:7px;height:434px;background:#e4e7f1;border-radius:3px"></div>
<div class="t" style="left:1017.90px;top:140.00px;font-size:12.68px;color:#a3a9b8;font-weight:400">Trend for Last 60min</div>
<div class="t" style="left:1017.90px;top:176.00px;font-size:11.67px;color:#6c758a;font-weight:700">Rate</div>
<div class="abs" style="left:1018px;top:205px;width:17.5px;height:17.5px;border:1px solid #e3e6ee;border-radius:3px;background:#fff"></div>
<div class="abs" style="left:1022px;top:208.6px;width:3.8px;height:11.2px;background:#6b9bfd;border-radius:1.9px 1.9px 0 0"></div>
<div class="abs" style="left:1028px;top:212.1px;width:3.9px;height:7.7px;background:#9aa0b2;border-radius:1.9px 1.9px 0 0"></div>
<div class="abs" style="left:1041px;top:204px;width:248px;height:57px;border:1px solid #5b8def;border-radius:6px;background:#fff;box-shadow:0 2px 10px rgba(40,60,120,0.10)"></div>
<div class="abs" style="left:1050px;top:232px;width:230px;height:20px;background:#f6f7f9"></div>
<div class="t" style="left:1050.50px;top:214.00px;font-size:12.08px;color:#1d2a4f;font-weight:700">Request Rate</div>
<div class="t" style="left:1251.80px;top:214.00px;font-size:12.59px;color:#1d2a4f;font-weight:700">1.9/s</div>
<svg width="1335" height="829"><path d="M1052 232.6 C1080 232.2 1100 233.4 1130 232.8 S1200 233.2 1230 232.6 S1265 232.4 1278 231.6" stroke="#5b8def" stroke-width="2" fill="none"/></svg>
<div class="abs" style="left:1050px;top:291.0px;width:230px;height:21.6px;background:#f6f7f9"></div>
<div class="t" style="left:1050.30px;top:275.00px;font-size:12.4px;color:#2a3866;font-weight:400">Error Rate</div>
<div class="t" style="left:1262.46px;top:274.00px;font-size:13.0px;color:#2a3866;font-weight:400">0/s</div>
<div class="abs" style="left:1050px;top:352.0px;width:230px;height:21.6px;background:#f6f7f9"></div>
<div class="t" style="left:1050.30px;top:336.00px;font-size:12.4px;color:#2a3866;font-weight:400">Connection Rate</div>
<div class="t" style="left:1262.46px;top:335.00px;font-size:13.0px;color:#2a3866;font-weight:400">0/s</div>
<div class="abs" style="left:1050px;top:413.0px;width:230px;height:21.6px;background:#f6f7f9"></div>
<div class="t" style="left:1050.30px;top:397.00px;font-size:12.4px;color:#2a3866;font-weight:400">Connection Error Rate</div>
<div class="t" style="left:1262.46px;top:396.00px;font-size:13.0px;color:#2a3866;font-weight:400">0/s</div>
<div class="abs" style="left:1050px;top:474.0px;width:230px;height:21.6px;background:#f6f7f9"></div>
<div class="t" style="left:1050.30px;top:458.00px;font-size:12.4px;color:#2a3866;font-weight:400">Error Rate 4xx</div>
<div class="t" style="left:1262.46px;top:457.00px;font-size:13.0px;color:#2a3866;font-weight:400">0/s</div>
<div class="abs" style="left:1050px;top:535.0px;width:230px;height:21.6px;background:#f6f7f9"></div>
<div class="t" style="left:1050.30px;top:519.00px;font-size:12.4px;color:#2a3866;font-weight:400">Error Rate 5xx</div>
<div class="t" style="left:1262.46px;top:518.00px;font-size:13.0px;color:#2a3866;font-weight:400">0/s</div>
<div class="abs" style="left:1050px;top:596.0px;width:230px;height:21.6px;background:#f6f7f9"></div>
<div class="t" style="left:1050.30px;top:580.00px;font-size:12.4px;color:#2a3866;font-weight:400">Error Rate Client</div>
<div class="t" style="left:1262.46px;top:579.00px;font-size:13.0px;color:#2a3866;font-weight:400">0/s</div>
<div class="abs" style="left:1050px;top:657.0px;width:230px;height:21.6px;background:#f6f7f9"></div>
<div class="t" style="left:1050.30px;top:641.00px;font-size:12.4px;color:#2a3866;font-weight:400">Error Rate Upstream</div>
<div class="t" style="left:1262.46px;top:640.00px;font-size:13.0px;color:#2a3866;font-weight:400">0/s</div>
<div class="t" style="left:1017.50px;top:709.00px;font-size:12.21px;color:#6c758a;font-weight:700">Throughput</div>
<div class="abs" style="left:1050px;top:766px;width:230px;height:18.5px;background:#f6f7f9"></div>
<svg width="1335" height="829"><path d="M1052 765.6 C1090 765.2 1110 766.4 1150 765.6 S1220 766 1250 765.4 S1270 765 1278 764.8" stroke="#8d96ae" stroke-width="1.8" fill="none"/></svg>
<div class="t" style="left:1050.60px;top:747.00px;font-size:12.73px;color:#2a3866;font-weight:400">Upstream Throughput</div>
<div class="t" style="left:1234.78px;top:747.00px;font-size:12.71px;color:#2a3866;font-weight:400">5.4kbps</div>
<div class="t" style="left:1050.60px;top:809.00px;font-size:12.73px;color:#2a3866;font-weight:400">Downstream Throughput</div>
<div class="t" style="left:1234.78px;top:809.00px;font-size:12.71px;color:#2a3866;font-weight:400">2.2kbps</div>
<div class="abs" style="left:990px;top:819px;width:345px;height:10px;background:#f6f7f9"></div>
<div class="abs" style="left:990px;top:818px;width:324px;height:1px;background:#e4e7f0"></div>
<div class="abs" style="left:1316px;top:130px;width:1px;height:686px;background:#e4e7f0"></div>
</body></html>
